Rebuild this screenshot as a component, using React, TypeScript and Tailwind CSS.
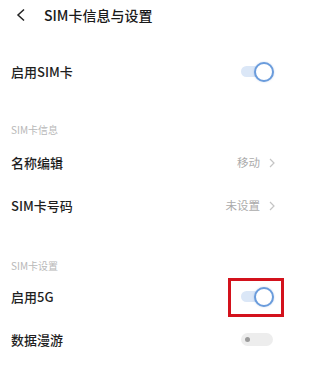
const font = { fontFamily: '"Noto Sans CJK SC", "Noto Sans", sans-serif' }

function Toggle({ on, marked }: { on: boolean; marked?: boolean }) {
  if (!on) {
    return (
      <div className="relative mr-[3px] h-[13px] w-[32px] rounded-full bg-[#ededed] flex items-center">
        <div className="ml-[4px] h-[5px] w-[5px] rounded-full bg-[#9b9b9b]" />
      </div>
    )
  }
  return (
    <div className="relative mr-[2px] h-[20px] w-[33px] flex items-center">
      <div className="h-[11px] w-[24px] rounded-l-full bg-[#dbe7f7]" />
      <div className="absolute right-0 top-0 h-[20px] w-[20px] rounded-full border-2 border-[#6a9cdc] bg-white shadow-[0_0_2px_rgba(80,130,200,0.35)]" />
      {marked && (
        <div className="absolute left-[-13px] right-[-10px] top-[-9px] bottom-[-10px] border-[3px] border-[#d3121c]" />
      )}
    </div>
  )
}

function Chevron() {
  return (
    <svg width="8" height="10" viewBox="0 0 8 10" className="ml-[8px]">
      <polyline points="2,1 6,5 2,9" fill="none" stroke="#c4c4c4" strokeWidth="1.2" />
    </svg>
  )
}

function Row({ label, children }: { label: string; children: React.ReactNode }) {
  return (
    <div className="h-[43px] flex items-center justify-between pl-[11px] pr-[20px]">
      <span className="text-[13px] leading-none font-medium text-[#1f1f1f]">{label}</span>
      <div className="flex items-center">{children}</div>
    </div>
  )
}

function Value({ text }: { text: string }) {
  return (
    <>
      <span className="text-[11.5px] leading-none text-[#ababab]">{text}</span>
      <Chevron />
    </>
  )
}

export default function App() {
  return (
    <div className="w-[296px] h-[365px] bg-white overflow-hidden" style={font}>
      <div className="h-[30px] flex items-center">
        <svg width="10" height="14" viewBox="0 0 10 14" className="ml-[16px]">
          <polyline points="8,1.5 2,7 8,12.5" fill="none" stroke="#222" strokeWidth="1.5" />
        </svg>
        <span className="ml-[18px] text-[14px] leading-none font-medium text-[#1a1a1a]">SIM卡信息与设置</span>
      </div>

      <div className="mt-[20px]">
        <Row label="启用SIM卡">
          <Toggle on />
        </Row>
      </div>

      <div className="h-[48px] flex items-end pb-[6px] pl-[11px]">
        <span className="text-[10px] leading-[11px] text-[#b8b8b8]">SIM卡信息</span>
      </div>
      <Row label="名称编辑">
        <Value text="移动" />
      </Row>
      <Row label="SIM卡号码">
        <Value text="未设置" />
      </Row>

      <div className="h-[48px] flex items-end pb-[4px] pl-[11px]">
        <span className="text-[10px] leading-[11px] text-[#b8b8b8]">SIM卡设置</span>
      </div>
      <Row label="启用5G">
        <Toggle on marked />
      </Row>
      <Row label="数据漫游">
        <Toggle on={false} />
      </Row>
    </div>
  )
}
